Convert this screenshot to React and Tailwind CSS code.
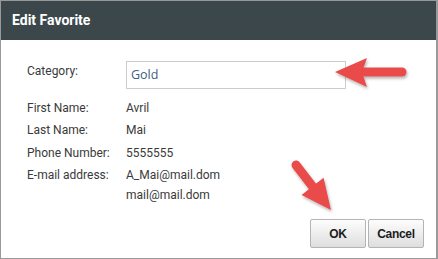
import React from 'react';

const rows = [
    { label: 'First Name:', value: ['Avril'] },
    { label: 'Last Name:', value: ['Mai'] },
    { label: 'Phone Number:', value: ['5555555'] },
    { label: 'E-mail address:', value: ['A_Mai@mail.dom', 'mail@mail.dom'] },
];

const DialogButton = ({ children }) => (
    <button className="w-[56px] h-[29px] border border-[#b4b4b4] rounded-[2px] bg-gradient-to-b from-[#fdfdfd] to-[#dedede] text-[12px] font-bold text-[#1c1c1c] font-['Liberation_Sans',Arial,sans-serif] tracking-[-0.3px]">
        {children}
    </button>
);

const Arrows = () => (
    <svg className="absolute left-0 top-0 pointer-events-none" width="438" height="259" viewBox="0 0 438 259">
        <defs>
            <filter id="shadow" x="-20%" y="-20%" width="140%" height="140%">
                <feDropShadow dx="1" dy="2" stdDeviation="1.5" floodColor="#000" floodOpacity="0.3" />
            </filter>
        </defs>
        <g filter="url(#shadow)" fill="#e84b48" stroke="none">
            <line x1="402" y1="72" x2="360" y2="72" stroke="#e84b48" strokeWidth="9" strokeLinecap="round" />
            <polygon points="335,72 367,58 362,72 367,87" />
            <line x1="296" y1="165" x2="316" y2="191" stroke="#e84b48" strokeWidth="9" strokeLinecap="round" />
            <polygon points="331,210 301.6,194.9 309,189 323.6,177.7" />
        </g>
    </svg>
);

const App = () => {
    return (
        <div className="relative w-[438px] h-[259px] bg-white font-['Roboto',sans-serif]">
            <div className="flex flex-col h-full border-t border-l border-b border-r-2 border-[#999]">
                <header className="h-[39px] shrink-0 bg-[#3c474c] pl-[11px] flex items-center text-white text-[14px] font-bold">
                    Edit Favorite
                </header>

                <div className="flex flex-col flex-1 pl-[26px] text-[12px] text-[#3a3a3a]">
                    <div className="flex items-start mt-[21px]">
                        <span className="w-[99px] leading-4 pt-[2px]">Category:</span>
                        <div className="w-[220px] h-[28px] border border-[#cccccc] pl-[4px] flex items-center text-[12.5px] text-[#3f5d80] font-['Open_Sans',sans-serif]">
                            Gold
                        </div>
                    </div>

                    <div className="flex flex-col gap-[2.3px] mt-[9px]">
                        {rows.map((row) => (
                            <div key={row.label} className="flex leading-5">
                                <span className="w-[99px]">{row.label}</span>
                                <div className="flex flex-col">
                                    {row.value.map((v) => (
                                        <span key={v}>{v}</span>
                                    ))}
                                </div>
                            </div>
                        ))}
                    </div>

                    <div className="mt-auto mb-[10px] pr-[12px] flex justify-end gap-[2px]">
                        <DialogButton>OK</DialogButton>
                        <DialogButton>Cancel</DialogButton>
                    </div>
                </div>
            </div>
            <Arrows />
        </div>
    );
};

export default App;
